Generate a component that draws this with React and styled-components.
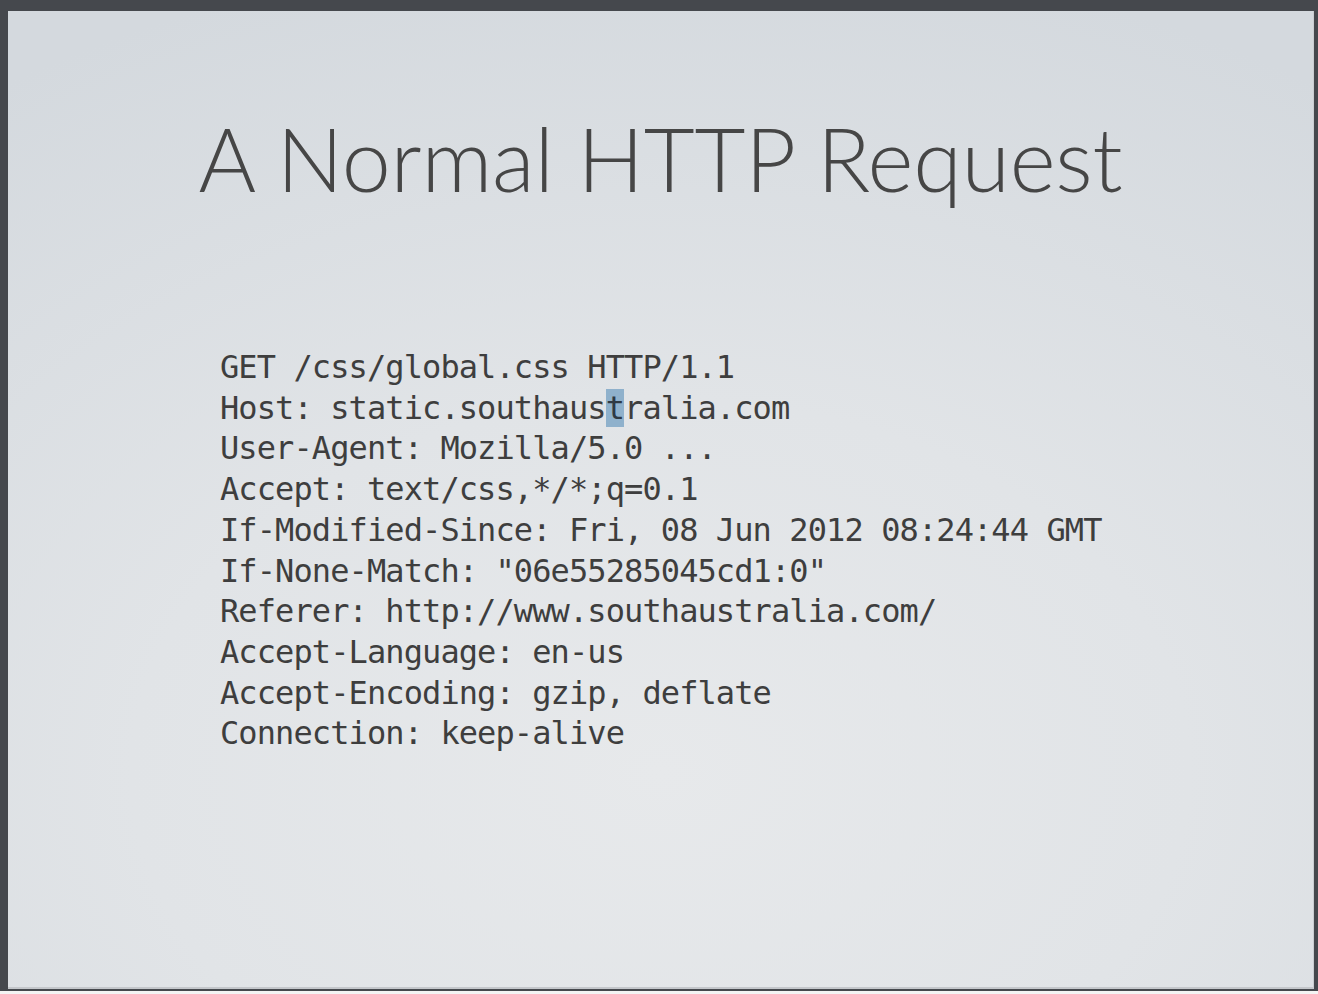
import styled, { createGlobalStyle } from "styled-components";

const GlobalStyle = createGlobalStyle`
  html, body {
    margin: 0;
    padding: 0;
    background: #f4f4f4;
  }
`;

const lines = [
  "GET /css/global.css HTTP/1.1",
  ["Host: static.southaus", "t", "ralia.com"],
  "User-Agent: Mozilla/5.0 ...",
  "Accept: text/css,*/*;q=0.1",
  "If-Modified-Since: Fri, 08 Jun 2012 08:24:44 GMT",
  'If-None-Match: "06e55285045cd1:0"',
  "Referer: http://www.southaustralia.com/",
  "Accept-Language: en-us",
  "Accept-Encoding: gzip, deflate",
  "Connection: keep-alive",
];

export default function App() {
  return (
    <>
      <GlobalStyle />
      <Frame>
        <Slide>
          <Title>A Normal HTTP Request</Title>
          <Code>
            {lines.map((line, i) =>
              Array.isArray(line) ? (
                <Line key={i}>
                  {line[0]}
                  <Cursor>{line[1]}</Cursor>
                  {line[2]}
                </Line>
              ) : (
                <Line key={i}>{line}</Line>
              )
            )}
          </Code>
        </Slide>
      </Frame>
    </>
  );
}

const Frame = styled.div`
  box-sizing: border-box;
  height: 991px;
  display: flex;
  padding: 11px 4px 2px 8px;
  background: #45484d;
`;

const Slide = styled.div`
  flex: 1;
  display: flex;
  flex-direction: column;
  border-right: 1px solid #c9ccd0;
  border-bottom: 2px solid #c4c7cb;
  background: radial-gradient(
    ellipse 90% 85% at 50% 78%,
    #e7e9eb 0%,
    #e1e4e7 45%,
    #d4d9de 100%
  );
`;

const Title = styled.h1`
  margin: 93px 0 0;
  text-align: center;
  font-family: Lato, "Open Sans", sans-serif;
  font-weight: 300;
  font-size: 88px;
  line-height: 108px;
  letter-spacing: -0.2px;
  color: #464646;
`;

const Code = styled.div`
  margin: 135px 0 0 212px;
  font-family: "DejaVu Sans Mono", "Liberation Mono", monospace;
  font-size: 32px;
  letter-spacing: -0.9px;
  line-height: 40.7px;
  color: #3e3e3e;
`;

const Line = styled.div`
  white-space: pre;
`;

const Cursor = styled.span`
  background: #8fb1cc;
  color: #2f3a44;
`;
